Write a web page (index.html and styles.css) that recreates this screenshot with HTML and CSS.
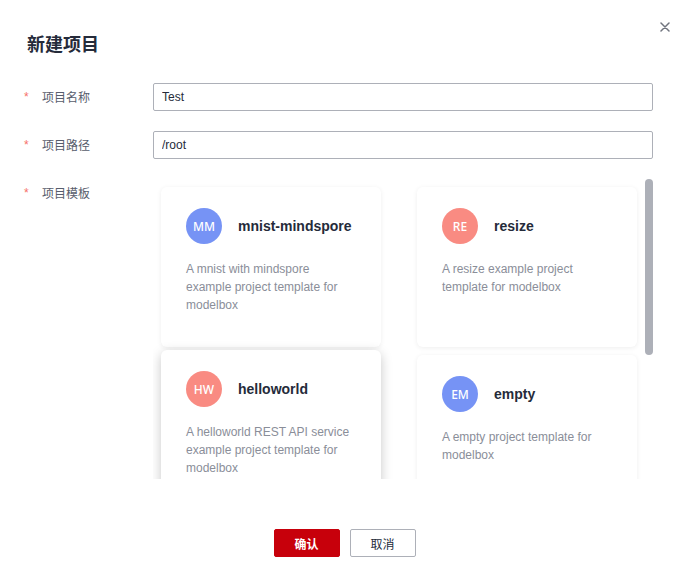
FILE: index.html
```html
<!DOCTYPE html>
<html lang="zh">
<head>
<meta charset="utf-8">
<title>新建项目</title>
<link rel="stylesheet" href="styles.css">
</head>
<body>
<div class="dialog">
  <button class="close" aria-label="关闭">
    <svg width="10" height="10" viewBox="0 0 10 10"><path d="M1 1L9 9M9 1L1 9" stroke="#71757f" stroke-width="1.5" stroke-linecap="round"/></svg>
  </button>
  <h1 class="title">新建项目</h1>
  <div class="form">
    <div class="row">
      <label class="label"><span class="req">*</span>项目名称</label>
      <input class="input" type="text" value="Test">
    </div>
    <div class="row">
      <label class="label"><span class="req">*</span>项目路径</label>
      <input class="input" type="text" value="/root">
    </div>
    <div class="row">
      <label class="label"><span class="req">*</span>项目模板</label>
      <div class="scrollbox">
        <div class="scroller">
          <div class="grid">
            <div class="card">
              <div class="head"><span class="avatar blue">MM</span><span class="name">mnist-mindspore</span></div>
              <p class="desc">A mnist with mindspore example project template for modelbox</p>
            </div>
            <div class="card">
              <div class="head"><span class="avatar red">RE</span><span class="name">resize</span></div>
              <p class="desc">A resize example project template for modelbox</p>
            </div>
            <div class="card raised">
              <div class="head"><span class="avatar red">HW</span><span class="name">helloworld</span></div>
              <p class="desc">A helloworld REST API service example project template for modelbox</p>
            </div>
            <div class="card">
              <div class="head"><span class="avatar blue">EM</span><span class="name">empty</span></div>
              <p class="desc">A empty project template for modelbox</p>
            </div>
          </div>
        </div>
        <div class="track"><div class="thumb"></div></div>
      </div>
    </div>
  </div>
  <div class="footer">
    <button class="btn primary">确认</button>
    <button class="btn">取消</button>
  </div>
</div>
</body>
</html>
```

FILE: styles.css
```css
* { box-sizing: border-box; }
html, body { margin: 0; padding: 0; background: #fff; }
body {
  font-family: "Liberation Sans", Arial, "Noto Sans CJK SC", sans-serif;
  color: #252b3a;
  font-size: 12px;
}
.dialog {
  position: relative;
  width: 689px;
  height: 573px;
  padding: 30px 36px 0 24px;
  overflow: hidden;
}
.close {
  position: absolute;
  top: 22px;
  left: 660px;
  width: 10px;
  height: 10px;
  padding: 0;
  border: 0;
  background: none;
  display: block;
}
.close svg { display: block; }
.title {
  margin: 0 0 0 3px;
  font-size: 18px;
  line-height: 26px;
  font-weight: 700;
  color: #252b3a;
  font-family: "Noto Sans CJK SC", sans-serif;
}
.form {
  margin-top: 27px;
  display: flex;
  flex-direction: column;
  gap: 20px;
}
.row {
  display: flex;
  align-items: flex-start;
}
.label {
  width: 129px;
  flex: none;
  line-height: 28px;
  font-size: 12px;
  color: #575d6c;
  font-family: "Noto Sans CJK SC", sans-serif;
  display: flex;
}
.req {
  color: #f66f6a;
  width: 18px;
  font-family: "Liberation Sans", Arial, sans-serif;
}
.input {
  width: 500px;
  height: 28px;
  border: 1px solid #adb0b8;
  border-radius: 2px;
  padding: 0 8px;
  font: 12px "Liberation Sans", Arial, sans-serif;
  color: #252b3a;
  outline: none;
}
.scrollbox {
  width: 500px;
  height: 300px;
  display: flex;
}
.scroller {
  width: 492px;
  height: 300px;
  overflow: hidden;
}
.track {
  width: 8px;
  height: 300px;
  flex: none;
}
.thumb {
  width: 8px;
  height: 176px;
  border-radius: 4px;
  background: #adb0b8;
}
.grid {
  display: grid;
  grid-template-columns: 220px 220px;
  column-gap: 36px;
  row-gap: 8px;
  padding: 8px;
}
.card {
  height: 160px;
  background: #fff;
  border-radius: 6px;
  padding: 21px 25px;
  box-shadow: 0 1px 5px rgba(0, 0, 0, 0.07);
}
.card.raised {
  transform: translateY(-5px);
  box-shadow: 0 3px 12px rgba(0, 0, 0, 0.22);
}
.head {
  display: flex;
  align-items: center;
  gap: 16px;
}
.avatar {
  width: 36px;
  height: 36px;
  border-radius: 50%;
  display: flex;
  align-items: center;
  justify-content: center;
  color: #fff;
  font-size: 12px;
  font-family: "Noto Sans", sans-serif;
  font-weight: 500;
  flex: none;
}
.avatar.blue { background: #7693f5; }
.avatar.red { background: #f98b82; }
.name {
  font-size: 14px;
  font-weight: 700;
  color: #252b3a;
}
.desc {
  margin: 16px 0 0;
  font-size: 12px;
  line-height: 18px;
  color: #8a8e99;
}
.footer {
  margin-top: 50px;
  display: flex;
  justify-content: center;
  gap: 10px;
  padding-left: 12px;
}
.btn {
  width: 66px;
  height: 28px;
  border: 1px solid #adb0b8;
  border-radius: 2px;
  background: #fff;
  color: #252b3a;
  font: 12px "Noto Sans CJK SC", sans-serif;
  padding: 0;
}
.btn.primary {
  background: #c7000b;
  border-color: #c7000b;
  color: #fff;
  font-weight: 700;
}
```
